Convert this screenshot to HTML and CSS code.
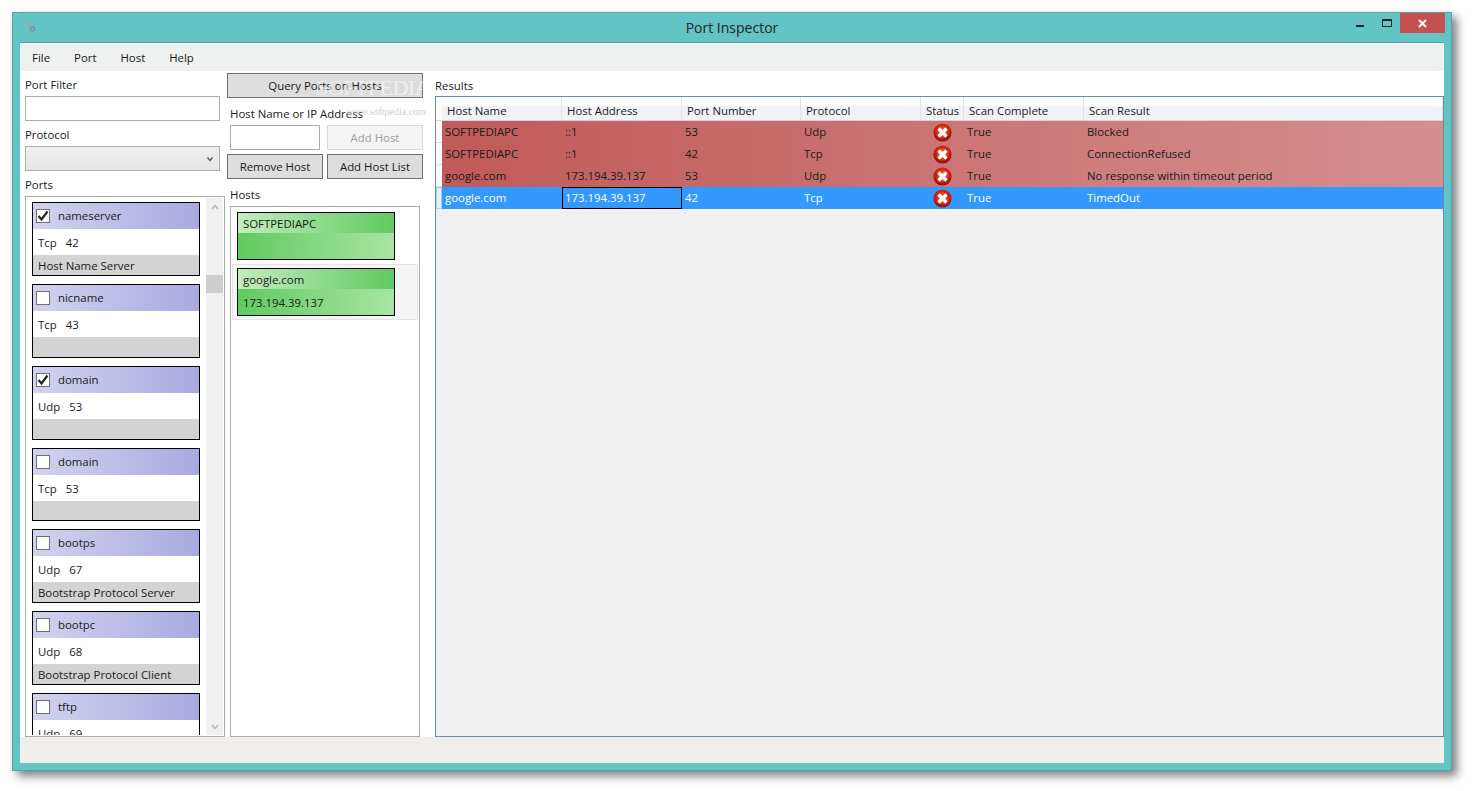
FILE: index.html
```html
<!DOCTYPE html>
<html lang="en">
<head>
<meta charset="utf-8">
<title>Port Inspector</title>
<link rel="stylesheet" href="styles.css">
</head>
<body>
<div class="window">
  <header class="titlebar">
    <svg class="app-icon" width="12" height="11" viewBox="0 0 12 11"><path d="M2.5 2 L8 7.5" stroke="#97a5a5" stroke-width="2.2"/><circle cx="2.5" cy="2" r="1.8" fill="#a5abab"/><circle cx="8.5" cy="8" r="2" fill="none" stroke="#7f9595" stroke-width="1.5"/></svg>
    <h1 class="title">Port Inspector</h1>
    <div class="controls">
      <span class="ctl-min"></span>
      <span class="ctl-max"></span>
      <span class="ctl-close"><svg width="9" height="9" viewBox="0 0 9 9"><path d="M1 1 L8 8 M8 1 L1 8" stroke="#fff" stroke-width="2"/></svg></span>
    </div>
  </header>
  <div class="client">
    <nav class="menu"><span>File</span><span>Port</span><span>Host</span><span>Help</span></nav>
    <main class="main">
      <section class="left">
        <label class="lbl lbl-first">Port Filter</label>
        <div class="input"></div>
        <label class="lbl">Protocol</label>
        <div class="combo"><svg width="6" height="6" viewBox="0 0 6 6"><path d="M0.5 1.5 L3 4.5 L5.5 1.5" fill="none" stroke="#555" stroke-width="1.3"/></svg></div>
        <label class="lbl">Ports</label>
        <div class="ports">
          <div class="ports-scroll">
            <article class="port"><div class="port-head"><span class="check"><svg width="12" height="12" viewBox="0 0 12 12"><path d="M1.5 6 L4.5 9.5 L10.5 1.5" fill="none" stroke="#222" stroke-width="2.2"/></svg></span>nameserver</div><div class="port-num"><span>Tcp</span><span>42</span></div><div class="port-desc">Host Name Server</div></article>
            <article class="port"><div class="port-head"><span class="check"></span>nicname</div><div class="port-num"><span>Tcp</span><span>43</span></div><div class="port-desc"></div></article>
            <article class="port"><div class="port-head"><span class="check"><svg width="12" height="12" viewBox="0 0 12 12"><path d="M1.5 6 L4.5 9.5 L10.5 1.5" fill="none" stroke="#222" stroke-width="2.2"/></svg></span>domain</div><div class="port-num"><span>Udp</span><span>53</span></div><div class="port-desc"></div></article>
            <article class="port"><div class="port-head"><span class="check"></span>domain</div><div class="port-num"><span>Tcp</span><span>53</span></div><div class="port-desc"></div></article>
            <article class="port"><div class="port-head"><span class="check"></span>bootps</div><div class="port-num"><span>Udp</span><span>67</span></div><div class="port-desc">Bootstrap Protocol Server</div></article>
            <article class="port"><div class="port-head"><span class="check"></span>bootpc</div><div class="port-num"><span>Udp</span><span>68</span></div><div class="port-desc">Bootstrap Protocol Client</div></article>
            <article class="port"><div class="port-head"><span class="check"></span>tftp</div><div class="port-num"><span>Udp</span><span>69</span></div><div class="port-desc"></div></article>
          </div>
          <div class="scrollbar">
            <svg width="8" height="6" viewBox="0 0 8 6"><path d="M1 5 L4 1.5 L7 5" fill="none" stroke="#b5b5b5" stroke-width="1.4"/></svg>
            <div class="thumb"></div>
            <svg class="arrow-down" width="8" height="6" viewBox="0 0 8 6"><path d="M1 1 L4 4.5 L7 1" fill="none" stroke="#b5b5b5" stroke-width="1.4"/></svg>
          </div>
        </div>
      </section>
      <section class="middle">
        <button class="btn btn-query">Query Ports on Hosts</button>
        <label class="lbl lbl-host">Host Name or IP Address</label>
        <div class="host-row host-row-a"><div class="input input-host"></div><button class="btn btn-off">Add Host</button></div>
        <div class="host-row host-row-b"><button class="btn">Remove Host</button><button class="btn">Add Host List</button></div>
        <label class="lbl lbl-host lbl-hosts">Hosts</label>
        <div class="hosts">
          <div class="host-wrap"><div class="host"><div class="host-a">SOFTPEDIAPC</div><div class="host-b"></div></div></div>
          <div class="host-wrap host-wrap-sel"><div class="host"><div class="host-a">google.com</div><div class="host-b">173.194.39.137</div></div></div>
        </div>
      </section>
      <section class="right">
        <label class="lbl lbl-results">Results</label>
        <div class="grid">
          <div class="row head"><i></i><span>Host Name</span><span>Host Address</span><span>Port Number</span><span>Protocol</span><span>Status</span><span>Scan Complete</span><span>Scan Result</span></div>
          <div class="row data"><i></i><span>SOFTPEDIAPC</span><span>::1</span><span>53</span><span>Udp</span><span class="st"><svg class="x" viewBox="0 0 20 20"><use href="#err"/></svg></span><span>True</span><span>Blocked</span></div>
          <div class="row data"><i></i><span>SOFTPEDIAPC</span><span>::1</span><span>42</span><span>Tcp</span><span class="st"><svg class="x" viewBox="0 0 20 20"><use href="#err"/></svg></span><span>True</span><span>ConnectionRefused</span></div>
          <div class="row data"><i></i><span>google.com</span><span>173.194.39.137</span><span>53</span><span>Udp</span><span class="st"><svg class="x" viewBox="0 0 20 20"><use href="#err"/></svg></span><span>True</span><span>No response within timeout period</span></div>
          <div class="row data sel"><i></i><span>google.com</span><span class="focus">173.194.39.137</span><span>42</span><span>Tcp</span><span class="st"><svg class="x" viewBox="0 0 20 20"><use href="#err"/></svg></span><span>True</span><span>TimedOut</span></div>
        </div>
      </section>
    </main>
    <footer class="status"></footer>
  </div>
</div>
<div class="wm wm-big">SOFTPEDIA</div>
<div class="wm wm-small">www.softpedia.com</div>
<svg class="defs" width="0" height="0"><defs>
  <radialGradient id="red" cx="50%" cy="35%" r="65%"><stop offset="0" stop-color="#e0401f"/><stop offset=".7" stop-color="#c01a12"/><stop offset="1" stop-color="#8a0f0c"/></radialGradient>
  <radialGradient id="glow" cx="50%" cy="50%" r="50%"><stop offset="0" stop-color="#f7b060"/><stop offset="1" stop-color="#f08040" stop-opacity="0"/></radialGradient>
  <g id="err"><circle cx="10" cy="10" r="9.6" fill="url(#red)"/><circle cx="10" cy="10" r="7" fill="url(#glow)"/><path d="M5.8 5.8 L14.2 14.2 M14.2 5.8 L5.8 14.2" stroke="#fff" stroke-width="3.4"/></g>
</defs></svg>
</body>
</html>
```
FILE: styles.css
```css
* { box-sizing: border-box; }
html, body { margin: 0; height: 100%; }
body { background: #fff; padding: 12px 20px 20px 12px; font: 11.4px/16px "Open Sans", "Noto Sans", sans-serif; color: #1a1a1a; overflow: hidden; }
.window { position: relative; width: 1440px; height: 759px; background: #62c4c4; border: 1px solid #55a5a8; box-shadow: 5px 5px 9px rgba(0,0,0,.5); padding: 0 7px 7px; display: flex; flex-direction: column; }
.titlebar { height: 29px; display: flex; align-items: flex-start; position: relative; flex: none; }
.app-icon { margin: 8px 0 0 4px; flex: none; }
.title { flex: 1; margin: 4px 0 0; font-size: 14px; font-weight: 400; line-height: 22px; text-align: center; color: #222; padding-left: 72px; }
.controls { display: flex; align-items: flex-start; }
.ctl-min { width: 8px; height: 2px; background: #222; margin-top: 12px; margin-right: 18px; }
.ctl-max { width: 10px; height: 8px; border: 1px solid #222; border-top-width: 2px; margin-top: 6px; margin-right: 8px; }
.ctl-close { width: 45px; height: 20px; background: #c75050; display: flex; align-items: center; justify-content: center; margin-right: -1px; }
.client { flex: 1; display: flex; flex-direction: column; background: #fff; border-top: 1px solid #4f9ea3; min-height: 0; }
.menu { height: 28px; flex: none; background: #eff0f0; display: flex; padding: 7px 0 0 12px; gap: 24px; line-height: 16px; }
.main { height: 666px; flex: none; display: flex; background: #fff; }
.left { width: 207px; padding-left: 5px; flex: none; display: flex; flex-direction: column; }
.lbl { display: block; height: 25px; line-height: 16px; padding-top: 6px; }
.lbl-first { height: 25px; }
.input { height: 25px; border: 1px solid #ababab; background: #fff; width: 195px; flex: none; }
.combo { height: 25px; width: 195px; flex: none; border: 1px solid #acacac; background: linear-gradient(#f0f0f0, #e5e5e5); display: flex; align-items: center; justify-content: flex-end; padding-right: 6px; }
.ports { flex: 1; width: 200px; min-height: 0; border: 1px solid #ababab; display: flex; overflow: hidden; }
.ports-scroll { width: 180px; padding: 5px 0 0 6px; overflow: hidden; height: 538px; flex: none; }
.port { width: 168px; height: 73.85px; margin-bottom: 8px; border: 1px solid #000; background: #fff; display: flex; flex-direction: column; overflow: hidden; }
.port-head { height: 26px; flex: none; background: linear-gradient(90deg, #d2d2ef, #a9a9e0); display: flex; align-items: center; padding-left: 3px; }
.check { width: 14px; height: 14px; flex: none; background: #fff; border: 1px solid #707070; margin-right: 8px; display: flex; align-items: center; justify-content: center; }
.port-num { height: 26px; flex: none; display: flex; align-items: center; padding: 2px 0 0 5px; gap: 9px; }
.port-desc { flex: 1; background: #d3d3d3; padding: 3px 0 0 5px; line-height: 16px; }
.scrollbar { width: 17px; height: 537px; margin: 1px 0 0 0; background: #f0f0f0; display: flex; flex-direction: column; align-items: center; padding-top: 6px; }
.thumb { width: 17px; height: 18px; background: #cdcdcd; margin-top: 65px; flex: none; }
.arrow-down { margin-top: auto; margin-bottom: 5px; }
.middle { width: 208px; flex: none; display: flex; flex-direction: column; }
.btn { display: block; height: 25px; width: 96px; flex: none; padding: 0; border: 1px solid #707070; background: #dddddd; font: inherit; color: inherit; }
.btn-query { width: 196px; margin-top: 2px; padding-top: 1px; }
.btn-off { border-color: #d9d9d9; background: #f4f4f4; color: #a0a0a0; }
.lbl-host { padding-left: 3px; height: 27px; padding-top: 8px; }
.host-row { display: flex; flex: none; justify-content: space-between; width: 196px; }
.host-row-a { padding-left: 3px; }
.host-row-b { margin-top: 4px; }
.input-host { width: 90px; }
.btn-off { width: 96px; }
.lbl-hosts { height: 27px; padding-top: 8px; }
.hosts { width: 190px; margin-left: 3px; flex: 1; min-height: 0; border: 1px solid #ababab; padding: 0 1px; background: #fff; }
.host-wrap { padding: 4px 0 3px 4px; height: 57px; border: 1px solid transparent; }
.host-wrap-sel { background: #f5f5f5; border-color: #e4e4e4; padding-top: 3px; height: 56px; }
.host { width: 158px; height: 48px; border: 1px solid #000; display: flex; flex-direction: column; }
.host-a { height: 20px; padding: 3px 0 0 5px; background: linear-gradient(90deg, #c4ebc0, #5fcb5f); }
.host-b { flex: 1; padding: 6px 0 0 5px; background: linear-gradient(90deg, #5fcb5f, #a9e4a4); }
.right { flex: 1; min-width: 0; display: flex; flex-direction: column; }
.lbl-results { height: 26px; padding-top: 7px; }
.grid { flex: none; height: 641px; width: 1009px; position: relative; border: 1px solid #6d8aad; background: #f0f0f0; }
.row { display: grid; grid-template-columns: 6px 120px 120px 119px 120px 43px 120px 1fr; }
.head { height: 24px; background: linear-gradient(#fff 0 40%, #f1f2f5 40%); border-bottom: 1px solid #d5d5d5; }
.head span { border-right: 1px solid #e2e3e5; padding: 6px 0 0 5px; line-height: 16px; white-space: nowrap; overflow: hidden; }
.head i { background: #fff; }
.data { height: 22px; }
.data i { background: #fff; border-bottom: 1px solid #d9dee4; }
.data span { padding: 3px 0 0 3px; line-height: 16px; white-space: nowrap; overflow: hidden; }
.data { background: linear-gradient(90deg, #c15a5a, #d58f8f) 6px 0 no-repeat; }
.sel { background: #3399ff; color: #fff; }
.sel i { background: #e3f1fc; border: 1px solid #a5d0f2; }
.focus { border: 1px solid #000; padding: 2px 0 0 2px !important; }
.st { display: flex; align-items: center; justify-content: center; padding: 1px 0 0 !important; }
.x { width: 19px; height: 19px; display: block; }
.status { flex: 1; background: #f0eded; }
.wm { position: absolute; color: #fff; font-family: "Liberation Serif", serif; white-space: nowrap; pointer-events: none; }
.wm-big { left: 316px; top: 76px; font-size: 22px; line-height: 24px; letter-spacing: -0.5px; opacity: .55; }
.wm-small { left: 346px; top: 105px; font-size: 10px; line-height: 14px; color: #d0d0d0; }
.defs { position: absolute; }
```
